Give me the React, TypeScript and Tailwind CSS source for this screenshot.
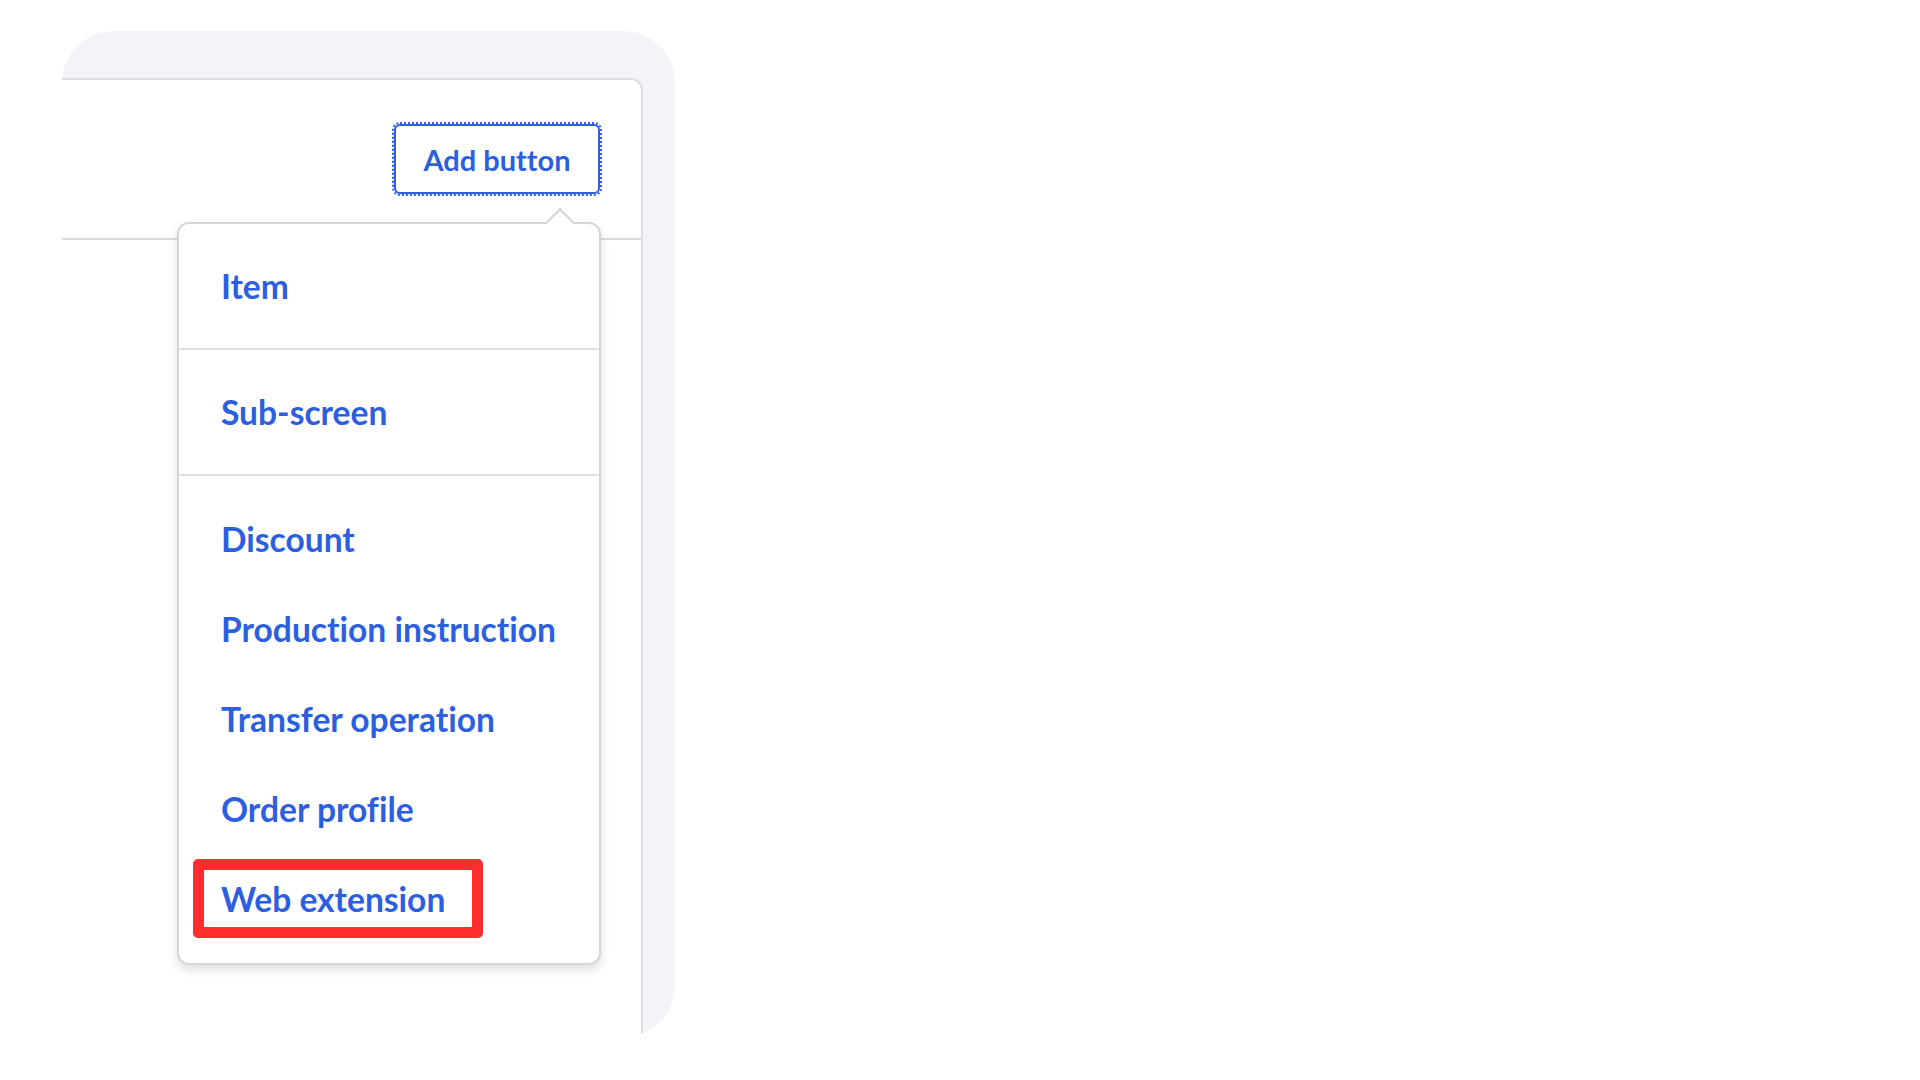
import React from "react";

const items = ["Discount", "Production instruction", "Transfer operation", "Order profile"];

export default function App() {
  return (
    <div className="w-[1920px] h-[1080px] bg-white relative overflow-hidden [font-variant-ligatures:none]" style={{ fontFamily: "Lato, 'Open Sans', sans-serif" }}>
      <div className="ml-[62px] mt-[31px] w-[613px] h-[1006px] rounded-[52px] bg-[#f3f4f8] overflow-hidden pt-[47px] pr-[32px]">
        <div className="relative h-full bg-white border-t-2 border-r-2 border-[#dcdee2] rounded-tr-[12px]">
          <div className="h-[160px] flex items-center justify-end pr-[41px] border-b-2 border-[#d8dadf]">
            <button className="w-[206px] h-[70px] border-2 border-[#2f5fe0] rounded-[6px] outline-2 outline-dotted outline-[#2f5fe0] bg-white text-[#2c5fe0] text-[29px] font-bold leading-none">
              Add button
            </button>
          </div>
          <div className="absolute left-[115px] top-[142px] w-[424px] h-[743px] bg-white border-2 border-[#d4d6da] rounded-[12px] shadow-[0_5px_10px_rgba(0,0,0,0.13)]">
            <div className="absolute left-[371px] top-[-12px] w-[20px] h-[20px] bg-white border-t-2 border-l-2 border-[#d4d6da] rotate-45"></div>
            <div className="relative flex flex-col text-[#2c5fe0] text-[33.6px] font-bold">
              <div className="h-[126px] flex items-center pl-[42px] border-b-2 border-[#dcdee2]">Item</div>
              <div className="h-[126px] flex items-center pl-[42px] border-b-2 border-[#dcdee2]">Sub-screen</div>
              <div className="pt-[18px] flex flex-col">
                {items.map((t) => (
                  <div key={t} className="h-[90px] flex items-center pl-[42px]">{t}</div>
                ))}
                <div className="relative h-[90px] flex items-center pl-[42px]">
                  <div className="absolute left-[14px] top-[5px] w-[290px] h-[79px] border-[11px] border-[#ff2d2d] rounded-[5px]"></div>
                  <span className="relative">Web extension</span>
                </div>
              </div>
            </div>
          </div>
        </div>
      </div>
    </div>
  );
}
